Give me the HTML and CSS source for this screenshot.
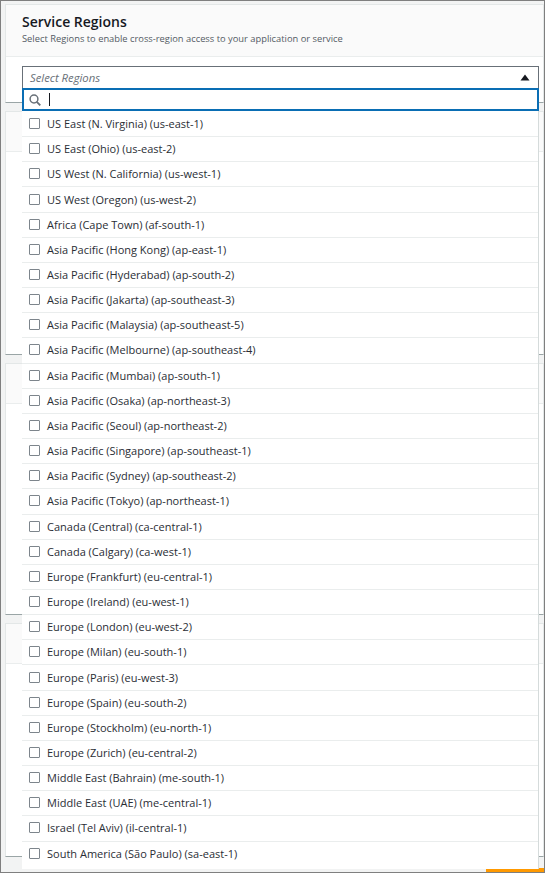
FILE: index.html
```html
<!DOCTYPE html>
<html lang="en">
    <head>
        <meta charset="utf-8"/>
        <title>Service Regions</title>
        <link rel="stylesheet" href="styles.css">
    </head>
    <body>
        <div class="frame">
            <!-- Cards behind the open dropdown -->
            <div class="card first">
                <div class="card-head">
                    <h2>Service Regions</h2>
                    <p>Select Regions to enable cross-region access to your application or service</p>
                </div>
            </div>
            <div class="card second"><div class="card-strip"></div></div>
            <div class="card third"><div class="card-strip"></div></div>
            <div class="card fourth"><div class="card-strip"></div></div>
            <div class="orange-btn"></div>

            <!-- Dropdown -->
            <div class="select-box">
                <span>Select Regions</span>
                <svg class="caret" width="10" height="7" viewBox="0 0 10 7"><path d="M5 0.5 L9.5 6.5 L0.5 6.5 Z" fill="#16191f"/></svg>
            </div>
            <div class="dropdown">
                <div class="search">
                    <svg width="12" height="12" viewBox="0 0 12 12"><circle cx="5" cy="5" r="3.9" fill="none" stroke="#687078" stroke-width="1.5"/><path d="M7.8 7.8 L11.3 11.3" stroke="#687078" stroke-width="1.9"/></svg>
                    <span class="cursor"></span>
                </div>
                <ul class="options">
                    <li><i></i>US East (N. Virginia) (us-east-1)</li>
                    <li><i></i>US East (Ohio) (us-east-2)</li>
                    <li><i></i>US West (N. California) (us-west-1)</li>
                    <li><i></i>US West (Oregon) (us-west-2)</li>
                    <li><i></i>Africa (Cape Town) (af-south-1)</li>
                    <li><i></i>Asia Pacific (Hong Kong) (ap-east-1)</li>
                    <li><i></i>Asia Pacific (Hyderabad) (ap-south-2)</li>
                    <li><i></i>Asia Pacific (Jakarta) (ap-southeast-3)</li>
                    <li><i></i>Asia Pacific (Malaysia) (ap-southeast-5)</li>
                    <li><i></i>Asia Pacific (Melbourne) (ap-southeast-4)</li>
                    <li><i></i>Asia Pacific (Mumbai) (ap-south-1)</li>
                    <li><i></i>Asia Pacific (Osaka) (ap-northeast-3)</li>
                    <li><i></i>Asia Pacific (Seoul) (ap-northeast-2)</li>
                    <li><i></i>Asia Pacific (Singapore) (ap-southeast-1)</li>
                    <li><i></i>Asia Pacific (Sydney) (ap-southeast-2)</li>
                    <li><i></i>Asia Pacific (Tokyo) (ap-northeast-1)</li>
                    <li><i></i>Canada (Central) (ca-central-1)</li>
                    <li><i></i>Canada (Calgary) (ca-west-1)</li>
                    <li><i></i>Europe (Frankfurt) (eu-central-1)</li>
                    <li><i></i>Europe (Ireland) (eu-west-1)</li>
                    <li><i></i>Europe (London) (eu-west-2)</li>
                    <li><i></i>Europe (Milan) (eu-south-1)</li>
                    <li><i></i>Europe (Paris) (eu-west-3)</li>
                    <li><i></i>Europe (Spain) (eu-south-2)</li>
                    <li><i></i>Europe (Stockholm) (eu-north-1)</li>
                    <li><i></i>Europe (Zurich) (eu-central-2)</li>
                    <li><i></i>Middle East (Bahrain) (me-south-1)</li>
                    <li><i></i>Middle East (UAE) (me-central-1)</li>
                    <li><i></i>Israel (Tel Aviv) (il-central-1)</li>
                    <li><i></i>South America (São Paulo) (sa-east-1)</li>
                </ul>
            </div>
        </div>
    </body>
</html>
```
FILE: styles.css
```css
html, body {
    margin: 0;
    height: 100%;
    overflow: hidden;
}

body {
    background: #fff;
    font-family: "Open Sans", "Noto Sans", sans-serif;
    color: #16191f;
}

.frame {
    position: relative;
    box-sizing: border-box;
    width: 545px;
    height: 873px;
    border: 1px solid #7f7f7f;
    background: #f2f3f3;
    padding: 3px 0 0 4px;
    display: flex;
    flex-direction: column;
    gap: 8px;
}

.card {
    box-sizing: border-box;
    background: #fff;
    border: 1px solid #e3e7e7;
    border-bottom-color: #9aa5a6;
    flex: none;
}

.first { height: 99px; }
.second { height: 244px; }
.third { height: 252px; }
.fourth { height: 234px; }

.card-head {
    height: 52px;
    box-sizing: border-box;
    padding: 8px 16px 0;
    background: #fafafa;
    border-bottom: 1px solid #eaeded;
}

.card-strip {
    height: 40px;
    box-sizing: border-box;
    background: #fafafa;
    border-bottom: 1px solid #eaeded;
}

h2 {
    margin: 0 0 1px;
    font-size: 14px;
    line-height: 18px;
    font-weight: 600;
}

.card-head p {
    margin: 0;
    font-size: 9.33px;
    line-height: 14px;
    color: #545b64;
}

.orange-btn {
    position: absolute;
    right: 0;
    bottom: 0;
    width: 58px;
    height: 4px;
    background: #ff9900;
}

.select-box {
    position: absolute;
    left: 21px;
    top: 65px;
    width: 517px;
    height: 23px;
    box-sizing: border-box;
    border: 1px solid #687078;
    background: #fff;
    padding: 0 0 1px 7px;
    display: flex;
    align-items: center;
    justify-content: space-between;
    font-size: 11.3px;
    font-style: italic;
    color: #687078;
}

.caret {
    margin: 1px 8px 0 0;
}

.dropdown {
    position: absolute;
    left: 21px;
    top: 87px;
    width: 517px;
    box-sizing: border-box;
    background: #fff;
    border-right: 1px solid #d5dbdb;
    padding-bottom: 2px;
}

.search {
    height: 23px;
    box-sizing: border-box;
    border: 2px solid #0a6eb4;
    margin-right: -1px;
    display: flex;
    align-items: center;
    padding-left: 5px;
    gap: 8px;
}

.cursor {
    width: 1px;
    height: 13px;
    background: #16191f;
}

.options {
    list-style: none;
    margin: 0;
    padding: 1px 0 0;
}

.options li {
    height: 25.17px;
    box-sizing: border-box;
    border-bottom: 1px solid #eaeded;
    display: flex;
    align-items: center;
    padding: 0 0 1px 7px;
    gap: 7px;
    font-size: 11px;
    color: #2a2e35;
}

.options li:last-child {
    border-bottom: 0;
}

.options i {
    width: 11px;
    height: 11px;
    box-sizing: border-box;
    border: 1px solid #7d858c;
    border-radius: 1px;
    background: #fff;
    flex: none;
}
```
